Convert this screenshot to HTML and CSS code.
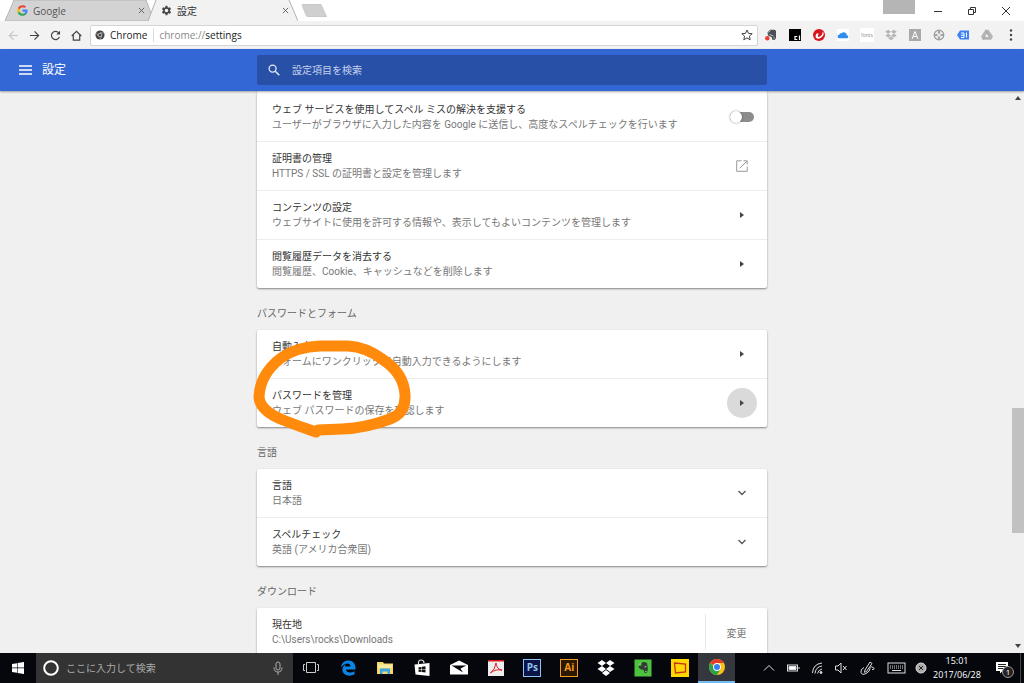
FILE: index.html
```html
<!DOCTYPE html>
<html lang="ja">
<head>
<meta charset="UTF-8">
<title>設定</title>
<link rel="stylesheet" href="styles.css">
</head>
<body>

  <!-- tab strip -->
  <div class="tab-strip">
    <div class="tab">
      <svg class="tab-shape" viewBox="0 0 150 21" preserveAspectRatio="none"><path d="M1 21L10 0H142L150 21Z" fill="#d3d3d3" stroke="#b5b5b5"/></svg>
      <svg class="tab-icon" viewBox="0 0 24 24"><path fill="#4285f4" d="M23 12.3c0-.8-.1-1.5-.2-2.3H12v4.500h6.200c-.3 1.400-1.100 2.600-2.300 3.400v2.900h3.700c2.200-2 3.400-5 3.400-8.500z"/><path fill="#34a853" d="M12 23.500c3.100 0 5.700-1 7.600-2.700l-3.700-2.900c-1 .7-2.400 1.100-3.900 1.100-3 0-5.500-2-6.400-4.700H1.800v2.900c1.900 3.700 5.800 6.300 10.200 6.300z"/><path fill="#fbbc05" d="M5.600 14.300c-.5-1.500-.5-3.100 0-4.600V6.800H1.800c-1.600 3.200-1.600 7.200 0 10.400z"/><path fill="#ea4335" d="M12 5c1.700 0 3.200.6 4.400 1.700l3.300-3.300C17.700 1.500 15 .5 12 .5 7.600.5 3.700 3.100 1.800 6.800l3.800 2.900C6.500 7 9 5 12 5z"/></svg>
      <span class="tab-title">Google</span>
      <button class="tab-close" aria-label="閉じる"><svg viewBox="0 0 8 8"><path d="M1 1l6 6M7 1L1 7"/></svg></button>
    </div>
    <div class="tab active">
      <svg class="tab-shape" viewBox="0 0 150 21" preserveAspectRatio="none"><path d="M0 21L8 0H141L150 21Z" fill="#f2f2f2"/><path d="M0 21L8 0M141 0L150 21" fill="none" stroke="#b0b0b0"/></svg>
      <svg class="tab-icon" viewBox="0 0 24 24"><path fill="#444" d="M19.400 13c0-.3.100-.6.100-1s0-.7-.1-1l2.600-2-2.500-4.300-3 1.200c-.6-.5-1.300-.9-2-1.200L14 1.500H10l-.5 3.200c-.7.300-1.400.7-2 1.200l-3-1.200L2 9l2.600 2c0 .3-.1.600-.1 1s0 .7.100 1L2 15l2.500 4.300 3-1.200c.6.500 1.300.9 2 1.200l.5 3.200h4l.5-3.200c.7-.3 1.400-.7 2-1.200l3 1.200L22 15zM12 16a4 4 0 1 1 0-8 4 4 0 0 1 0 8z"/></svg>
      <span class="tab-title">設定</span>
      <button class="tab-close" aria-label="閉じる"><svg viewBox="0 0 8 8"><path d="M1 1l6 6M7 1L1 7"/></svg></button>
    </div>
    <button class="new-tab" aria-label="新しいタブ"><svg viewBox="0 0 26 13"><path d="M1 .5H20L25.500 12.500H7Q5.500 12.500 5 11Z" fill="#cfcfcf" stroke="#c8c8c8"/></svg></button>
    <div class="window-controls">
      <span class="user-box"></span>
      <button aria-label="最小化"><svg viewBox="0 0 10 10"><path d="M1 5.500h8"/></svg></button>
      <button aria-label="元に戻す"><svg viewBox="0 0 10 10"><path d="M1.500 3.500h5v5h-5zM3.500 3V1.500h5v5H7"/></svg></button>
      <button aria-label="ウィンドウを閉じる"><svg viewBox="0 0 10 10"><path d="M1 1l8 8M9 1L1 9"/></svg></button>
    </div>
  </div>

  <!-- toolbar -->
  <div class="toolbar">
    <div class="nav">
      <button class="disabled" aria-label="戻る"><svg viewBox="0 0 12 12"><path d="M11 6H1.500M6 1.500L1.500 6 6 10.500"/></svg></button>
      <button aria-label="進む"><svg viewBox="0 0 12 12"><path d="M1 6h9.500M6 1.500L10.500 6 6 10.500"/></svg></button>
      <button aria-label="再読み込み"><svg viewBox="0 0 12 12"><path d="M10.300 7.500A4.500 4.500 0 1 1 9.500 3"/><path d="M11 .8V5H6.800z" fill="#444" stroke="none"/></svg></button>
      <button aria-label="ホーム"><svg viewBox="0 0 12 12"><path d="M.8 6.500L6 1.500l5.200 5M2.500 5.500V11h7V5.500"/></svg></button>
    </div>
    <div class="omnibox">
      <svg class="site-icon" viewBox="0 0 12 12"><circle cx="6" cy="6" r="5.500" fill="#444"/><circle cx="6" cy="6" r="2.200" fill="#444" stroke="#ccc"/><path d="M6 3.500h5M3.800 7.200L1.500 3.300M8.200 7.200L6 11.300" stroke="#ccc" stroke-width=".7"/></svg>
      <span class="site-name">Chrome</span>
      <label class="scheme" for="url">chrome://</label>
      <input id="url" type="text" value="settings">
      <button class="star" aria-label="ブックマーク"><svg viewBox="0 0 12 12"><path d="M6 1l1.500 3.400 3.700.3-2.800 2.500.8 3.600L6 8.900l-3.200 1.900.8-3.600L.8 4.700l3.700-.3z" fill="none" stroke="#444"/></svg></button>
    </div>
    <div class="extensions">
      <button aria-label="Evernote"><svg viewBox="0 0 12 12"><path d="M5 .8h4.500l1.500 1v7.500L9.500 11 7 10.500V8.500L3 6.500 2.500 3.500z" fill="#4a5055"/><path d="M3.500 3.500L5.500 1.500M4.500 5.500l4 1.500M8.500 9h1.500" stroke="#d5d8da" stroke-width=".8"/><circle cx="2.300" cy="9.300" r="2.200" fill="#ee3b34"/></svg></button>
      <button aria-label="Cl"><svg viewBox="0 0 12 12"><path d="M0 0h12v12H0z" fill="#000"/><path d="M8.300 7.500H6v3h2.300M10.500 6.500v4.500" fill="none" stroke="#fff" stroke-width="1.200"/></svg></button>
      <button aria-label="Trend"><svg viewBox="0 0 12 12"><circle cx="6" cy="6" r="6" fill="#d9141e"/><path d="M3.500 4.500h2.200L4.800 7q0 1.800 2.200.6Q9.500 6 10 2.500 12 6 8 8.800 4 11 2.700 8.300q-.4-1.500.8-3.800z" fill="#fff"/></svg></button>
      <button aria-label="iCloud"><svg viewBox="0 0 12 12"><path d="M0 0h12v12H0z" fill="#fff"/><path d="M2.500 9.300a1.800 1.800 0 0 1-.3-3.600A2 2 0 0 1 4.500 4.300a3 3 0 0 1 5.300 2 1.500 1.500 0 0 1 0 3z" fill="#2e8ff0"/></svg></button>
      <button class="fonts-ext">fonts</button>
      <button aria-label="Dropbox"><svg viewBox="0 0 12 12"><path d="M3.200.8L6 2.800 3.200 4.700.2 2.800zM8.800.8l3 2-3 1.900L6 2.800zM3.200 4.700L6 6.700 3.200 8.600l-3-2zM8.800 4.700l3 1.900-3 2L6 6.700zM6 7.500l2.800 1.800L6 11.200 3.200 9.300z" fill="#b4b4b4"/></svg></button>
      <button aria-label="Acrobat"><svg viewBox="0 0 12 12"><path d="M0 0h12v12H0z" fill="#a9a9a9"/><path d="M3 10L6 2.500 9 10M4.200 7.500h3.600" fill="none" stroke="#fff"/></svg></button>
      <button aria-label="Target"><svg viewBox="0 0 12 12"><circle cx="6" cy="6" r="4.800" fill="#eee" stroke="#999" stroke-width="1.200"/><path d="M6 2v2.500M6 7.500V10M2 6h2.500M7.500 6H10" stroke="#a2a2a2" stroke-width="2.200"/></svg></button>
      <button aria-label="Bookmark"><svg viewBox="0 0 12 12"><path d="M3 1.500h9v9H3L0 6z" fill="#3d82f3"/><path d="M4 4h3v4.500H4M4 6.200h3M9.500 3.500v5" fill="none" stroke="#fff"/></svg></button>
      <button aria-label="Drive"><svg viewBox="0 0 12 12"><path d="M4.500.8h3L12 7.500l-1.800 3.200H1.800L0 7.500z" fill="#b5b5b5"/><path d="M6 4.500L8 8H4z" fill="#eee"/><path d="M4.500.8l3.700 7M1.800 10.700L4 7.800" stroke="#999" stroke-width=".6"/></svg></button>
      <button aria-label="メニュー"><svg viewBox="0 0 12 12" fill="#444"><circle cx="6" cy="1.500" r="1.200"/><circle cx="6" cy="6" r="1.200"/><circle cx="6" cy="10.500" r="1.200"/></svg></button>
    </div>
  </div>

  <!-- settings header -->
  <header class="settings-header">
    <div class="header-left">
      <button class="menu" aria-label="メインメニュー"><svg viewBox="0 0 13 10"><path d="M0 1h13M0 5h13M0 9h13" stroke="#fff" stroke-width="1.500"/></svg></button>
      <h1>設定</h1>
    </div>
    <label class="search">
      <svg viewBox="0 0 12 12"><circle cx="4.600" cy="4.600" r="3.500" fill="none" stroke="#e4eaf7" stroke-width="1.300"/><path d="M7.300 7.300l4 4" stroke="#e4eaf7" stroke-width="1.500"/></svg>
      <input type="text" placeholder="設定項目を検索" aria-label="設定項目を検索">
    </label>
  </header>

  <div class="viewport">
    <main class="content">
      <section class="card first">
        <div class="row">
          <div class="row-text">
            <label class="row-title" for="spell">ウェブ サービスを使用してスペル ミスの解決を支援する</label>
            <p>ユーザーがブラウザに入力した内容を Google に送信し、高度なスペルチェックを行います</p>
          </div>
          <div class="action"><input class="toggle" type="checkbox" id="spell"></div>
        </div>
        <div class="row">
          <div class="row-text">
            <h3>証明書の管理</h3>
            <p>HTTPS / SSL の証明書と設定を管理します</p>
          </div>
          <button class="action" aria-label="証明書の管理"><svg class="launch" viewBox="0 0 12 12"><path d="M5.500.8H.7v10.500h10.500V6.500M7.500.8h3.700v3.700M11 1L3.800 8.200"/></svg></button>
        </div>
        <div class="row">
          <div class="row-text">
            <h3>コンテンツの設定</h3>
            <p>ウェブサイトに使用を許可する情報や、表示してもよいコンテンツを管理します</p>
          </div>
          <button class="action" aria-label="コンテンツの設定"><svg class="arrow" viewBox="0 0 4 6"><path d="M0 0l4 3-4 3z"/></svg></button>
        </div>
        <div class="row">
          <div class="row-text">
            <h3>閲覧履歴データを消去する</h3>
            <p>閲覧履歴、Cookie、キャッシュなどを削除します</p>
          </div>
          <button class="action" aria-label="閲覧履歴データを消去する"><svg class="arrow" viewBox="0 0 4 6"><path d="M0 0l4 3-4 3z"/></svg></button>
        </div>
      </section>

      <h2>パスワードとフォーム</h2>
      <section class="card">
        <div class="row">
          <div class="row-text">
            <h3>自動入力</h3>
            <p>フォームにワンクリックで自動入力できるようにします</p>
          </div>
          <button class="action" aria-label="自動入力"><svg class="arrow" viewBox="0 0 4 6"><path d="M0 0l4 3-4 3z"/></svg></button>
        </div>
        <div class="row">
          <div class="row-text">
            <h3>パスワードを管理</h3>
            <p>ウェブ パスワードの保存を確認します</p>
          </div>
          <button class="action pressed" aria-label="パスワードを管理"><svg class="arrow" viewBox="0 0 4 6"><path d="M0 0l4 3-4 3z"/></svg></button>
        </div>
        <!-- hand drawn marker -->
        <svg class="marker" viewBox="0 0 170 105"><path d="M66 97Q48 91 33 85Q10 76 9 62Q10 39 31 23Q46 12 70 11L98 11Q116 12 132 24Q154 38 155 60Q156 78 140 84Q116 93 92 94L68 95"/></svg>
      </section>

      <h2>言語</h2>
      <section class="card">
        <div class="row">
          <div class="row-text">
            <h3>言語</h3>
            <p>日本語</p>
          </div>
          <button class="action" aria-label="言語"><svg class="chevron" viewBox="0 0 8 6"><path d="M.5 1L4 4.500 7.500 1"/></svg></button>
        </div>
        <div class="row">
          <div class="row-text">
            <h3>スペルチェック</h3>
            <p>英語 (アメリカ合衆国)</p>
          </div>
          <button class="action" aria-label="スペルチェック"><svg class="chevron" viewBox="0 0 8 6"><path d="M.5 1L4 4.500 7.500 1"/></svg></button>
        </div>
      </section>

      <h2>ダウンロード</h2>
      <section class="card">
        <div class="row">
          <div class="row-text">
            <h3>現在地</h3>
            <p>C:\Users\rocks\Downloads</p>
          </div>
          <button class="change">変更</button>
        </div>
      </section>
    </main>
    <div class="scrollbar">
      <svg viewBox="0 0 6 4"><path d="M0 4l3-4 3 4z"/></svg>
      <div class="track"><div class="thumb"></div></div>
      <svg viewBox="0 0 6 4"><path d="M0 0l3 4 3-4z"/></svg>
    </div>
  </div>

  <!-- windows taskbar -->
  <footer class="taskbar">
    <button class="start" aria-label="スタート"><svg viewBox="0 0 14 14" fill="#fff"><path d="M1 3l5-.8v4.400H1zM6.600 2.100L13 1v5.600H6.600zM1 7.300h5v4.400L1 11zM6.600 7.300H13V13l-6.400-1z"/></svg></button>
    <label class="cortana">
      <svg class="ring" viewBox="0 0 16 16"><circle cx="8" cy="8" r="6.800" fill="none" stroke="#fff" stroke-width="2"/></svg>
      <input type="text" placeholder="ここに入力して検索" aria-label="ここに入力して検索">
      <svg class="mic" viewBox="0 0 10 14" fill="none" stroke="#aaa"><rect x="3" y="1" width="4" height="8" rx="2"/><path d="M1 6.500Q1 11 5 11T9 6.500M5 11v3"/></svg>
    </label>
    <div class="apps">
      <button aria-label="タスクビュー"><svg viewBox="0 0 18 18" fill="none" stroke="#ccc"><path d="M4.500 3.500h9v10h-9zM3 5.500H1.500v6H3M15 5.500h1.500v6H15"/></svg></button>
      <button aria-label="Edge"><svg viewBox="0 0 18 18"><path fill="#0b84e4" d="M2 8.500C2.500 4 5.500 1.500 9.500 1.500c4.500 0 7 3.200 7 7.500v1.500H7c.2 3 4.500 4 8.500 1.800v3.300C9 18.500 2.800 15.500 3.500 10c.3-2.500 2-4 3.500-4.700-.6.700-.9 1.400-1 2.200h5.500c0-4.200-6-4.200-9.500 1z"/></svg></button>
      <button aria-label="エクスプローラー"><svg viewBox="0 0 18 18"><path fill="#f5d66b" d="M1 3h6l1 1.500h9V15H1z"/><path fill="#fbe99f" d="M2 5.500h14V9H2z"/><path fill="#39a5e5" d="M4 9.500h10V15h-2.500v-2.500h-5V15H4z"/></svg></button>
      <button aria-label="ストア"><svg viewBox="0 0 18 18"><path d="M5.500 5Q5 1 8 1t3 3" fill="none" stroke="#ddd" stroke-width="1.200"/><path fill="#fff" d="M1.500 5.500L16.500 4v13L2.500 15.500z"/><path fill="#111" d="M5.500 8.300l3-.4v2.300h-3zM9 7.800l3.500-.5v2.900H9zM5.500 10.700h3V13l-3-.3zM9 10.700h3.500v2.900L9 13.100z"/></svg></button>
      <button aria-label="メール"><svg viewBox="0 0 18 18"><path fill="#fff" d="M0 6l9-4.500L18 6v9.500H0z"/><path fill="#05070c" d="M1.500 6.500h15L10.500 9.500l2.500 4z"/></svg></button>
      <button aria-label="PDF"><svg viewBox="0 0 18 18"><path fill="#eee" d="M1 1h16v16H1z"/><path fill="#d7191f" d="M1 1h16v1.500H1z"/><path d="M3.500 14Q8 11 9 4q.5 6 6 7.200Q9 9.500 3.500 14z" fill="none" stroke="#e01b22"/></svg></button>
      <button><span class="adobe ps">Ps</span></button>
      <button><span class="adobe ai">Ai</span></button>
      <button aria-label="Dropbox"><svg viewBox="0 0 18 18" fill="#fff"><path d="M5 1l4 3-4 3-4.500-3zM13 1l4.500 3L13 7 9 4zM5 7l4 3-4 3-4.500-3zM13 7l4.500 3-4.500 3-4-3zM9 11l4 3-4 3-4-3z"/></svg></button>
      <button aria-label="Evernote"><svg viewBox="0 0 18 18"><path fill="#4cc23f" d="M.5.500h17v17H.5z"/><path fill="#333b36" d="M7.500 3.500q3-1 5.500.5 1.500 4.500.3 9-2.500 2-3.500-.2l.2-1.800Q6.500 11 5 9L4.500 7l3-.5z"/><path d="M4.500 6L7 3.500M10.500 8l2-.5M11 12.500h1.500" stroke="#8fd487"/></svg></button>
      <button aria-label="画面"><svg viewBox="0 0 18 18"><path fill="#ffd800" d="M0 0h18v18H0z"/><path d="M3.500 4L14.500 5v8l-10 1z" fill="none" stroke="#c8321c" stroke-width="1.300"/></svg></button>
      <button class="current" aria-label="Chrome"><svg viewBox="0 0 18 18"><circle cx="9" cy="9" r="8" fill="#fbc116"/><path d="M9 9L2.100 5A8 8 0 0 1 15.900 5H9z" fill="#e33b2e"/><path d="M2.100 5A8 8 0 0 0 9 17l3.500-6H9z" fill="#2ca24c"/><circle cx="9" cy="9" r="3.900" fill="#fff"/><circle cx="9" cy="9" r="3" fill="#3b7ded"/></svg></button>
    </div>
    <div class="tray">
      <svg viewBox="0 0 24 16"><path d="M7 10.500l5-5 5 5"/></svg>
      <svg viewBox="0 0 24 16"><rect x="6.500" y="5" width="10" height="6"/><path d="M8 6.500h7v3H8z" fill="#fff"/><path d="M18 7v2"/></svg>
      <svg viewBox="0 0 24 16"><path d="M7.500 13Q8 4 17 3M10 13.500Q10.500 7 17 6M12.500 13.500Q13 10 17 9"/><circle cx="16" cy="12.500" r="1" fill="#ddd"/></svg>
      <svg viewBox="0 0 24 16"><path d="M6.500 6v4H9l3 3V3L9 6zM14 6l3.500 4M17.500 6L14 10"/></svg>
      <svg class="pen" viewBox="0 0 28 16"><path d="M12 10L17 2l2 1.500-5.500 8-2 .8zM11 7.500q-4 2-3 5t5 1 4-5 3-1-1 2"/></svg>
      <svg class="keyboard" viewBox="0 0 30 16"><rect x="7" y="3" width="17" height="10"/><path d="M9 6h13M9 8h13" stroke-dasharray="1 1"/><path d="M11 10.500h9"/></svg>
      <svg class="alert" viewBox="0 0 20 16"><circle cx="10" cy="8" r="5" fill="#aaa"/><path d="M8 6l4 4M12 6l-4 4" stroke="#222"/></svg>
      <div class="clock"><time>15:01</time><span>2017/06/28</span></div>
      <button class="notice" aria-label="通知"><svg viewBox="0 0 14 14"><path d="M1 1h12v9H7.500L5 12.500V10H1z" fill="#fff" stroke="none"/><path d="M3 3.500h8M3 5.500h8M3 7.500h5" stroke="#222"/></svg><span class="badge">1</span></button>
    </div>
  </footer>

</body>
</html>
```
FILE: styles.css
```css
* {
  box-sizing: border-box;
}
body {
  margin: 0;
  height: 100vh;
  display: flex;
  flex-direction: column;
  overflow: hidden;
  font-family: Roboto, "Noto Sans CJK JP", sans-serif;
  font-size: 10px;
  color: #333;
  background: #f0f0f0;
}
h1, h2, h3, p {
  margin: 0;
  font-weight: 400;
}
button, input {
  margin: 0;
  padding: 0;
  border: 0;
  background: none;
  color: inherit;
  font: inherit;
  min-width: 0;
}
button {
  display: flex;
  align-items: center;
  justify-content: center;
}
input {
  outline: none;
}
svg {
  display: block;
  flex: none;
}

/* tabs */
.tab-strip {
  display: flex;
  height: 21px;
  background: #fff;
  padding-left: 4px;
  font-family: "Open Sans", "Noto Sans CJK JP", sans-serif;
}
.tab {
  position: relative;
  display: flex;
  align-items: center;
  gap: 5px;
  width: 150px;
  padding: 0 9px 0 13px;
  color: #555;
}
.tab.active {
  margin-left: -6px;
  color: #333;
}
.tab-shape {
  position: absolute;
  inset: 0;
  width: 100%;
  height: 100%;
}
.tab-icon {
  position: relative;
  width: 11px;
  height: 11px;
}
.tab-title {
  position: relative;
  flex: 1;
}
.tab-close {
  position: relative;
  width: 8px;
  height: 8px;
}
.tab-close svg {
  width: 7px;
  height: 7px;
  stroke: #555;
}
.new-tab {
  align-self: center;
  margin-left: 3px;
}
.new-tab svg {
  width: 26px;
  height: 13px;
}
.window-controls {
  display: flex;
  margin-left: auto;
  padding-right: 1px;
}
.window-controls button {
  width: 34px;
  height: 21px;
}
.window-controls svg {
  width: 10px;
  height: 10px;
  fill: none;
  stroke: #333;
}
.user-box {
  width: 32px;
  height: 14px;
  margin-right: 6px;
  background: #b5b5b5;
}

/* toolbar */
.toolbar {
  display: flex;
  align-items: center;
  height: 28px;
  padding: 0 1px 0 3px;
  background: #f2f2f2;
  font-family: "Open Sans", sans-serif;
}
.nav, .extensions {
  display: flex;
}
.nav button {
  width: 21px;
  height: 20px;
}
.nav svg {
  width: 11px;
  height: 11px;
  fill: none;
  stroke: #444;
  stroke-width: 1.3;
}
.nav .disabled svg {
  stroke: #c4c4c4;
}
.omnibox {
  flex: 1;
  display: flex;
  align-items: center;
  height: 21px;
  margin: 0 1px 0 3px;
  padding: 0 4px;
  background: #fff;
  border: 1px solid #d5d5d5;
  border-radius: 2px;
  font-size: 10px;
}
.site-icon {
  width: 10px;
  height: 10px;
  margin-right: 5px;
}
.site-name {
  padding-right: 6px;
  border-right: 1px solid #ddd;
  color: #222;
}
.scheme {
  padding-left: 5px;
  color: #888;
}
.omnibox input {
  flex: 1;
  color: #222;
}
.star svg {
  width: 12px;
  height: 12px;
}
.extensions button {
  width: 24px;
  height: 20px;
}
.extensions svg {
  width: 12px;
  height: 12px;
}
.extensions .fonts-ext {
  width: 14px;
  height: 14px;
  margin: 3px 5px;
  background: #fff;
  color: #888;
  font-size: 5px;
}

/* blue header */
.settings-header {
  position: relative;
  z-index: 1;
  display: grid;
  grid-template-columns: 1fr minmax(0, 510px) 1fr;
  align-items: center;
  height: 42px;
  background: #3367d6;
  color: #fff;
  box-shadow: 0 1px 2px rgba(0,0,0,0.35);
}
.header-left {
  display: flex;
  align-items: center;
  gap: 10px;
  padding-left: 19px;
}
.menu svg {
  width: 13px;
  height: 10px;
}
.settings-header h1 {
  font-size: 12px;
  line-height: 16px;
}
.search {
  display: flex;
  align-items: center;
  gap: 12px;
  height: 30px;
  padding: 0 11px;
  background: #2850a7;
  border-radius: 2px;
}
.search svg {
  width: 12px;
  height: 12px;
}
.search input {
  flex: 1;
}
.search input::placeholder {
  color: #c5d2ed;
}

/* settings list */
.viewport {
  flex: 1;
  min-height: 0;
  display: flex;
  overflow: hidden;
}
.content {
  flex: 1;
  padding-left: 12px;
}
.content h2 {
  max-width: 510px;
  margin: 0 auto;
  padding: 18px 0 8px;
  font-size: 10px;
  line-height: 16px;
  color: #666;
}
.card {
  position: relative;
  max-width: 510px;
  margin: 0 auto;
  background: #fff;
  border-radius: 2px;
  box-shadow: 0 1px 2px rgba(0,0,0,0.45);
}
.card.first {
  padding-top: 2px;
}
.row {
  display: flex;
  align-items: center;
  height: 49px;
  padding: 0 10px 0 15px;
  border-bottom: 1px solid #ededed;
}
.row:last-of-type {
  height: 48px;
  border-bottom: 0;
}
.row-text {
  flex: 1;
  line-height: 15px;
}
.row-text h3, .row-title {
  display: block;
  font-size: 10px;
  color: #333;
}
.row-text p {
  color: #777;
}
.action {
  display: flex;
  align-items: center;
  justify-content: center;
  width: 30px;
  height: 30px;
  border-radius: 50%;
}
.action.pressed {
  background: #dadada;
}
.arrow {
  width: 4px;
  height: 6px;
  fill: #444;
}
.chevron {
  width: 8px;
  height: 6px;
  fill: none;
  stroke: #555;
  stroke-width: 1.3;
}
.launch {
  width: 12px;
  height: 12px;
  fill: none;
  stroke: #999;
}
.toggle {
  appearance: none;
  position: relative;
  width: 24px;
  height: 10px;
  border-radius: 5px;
  background: #8c8c8c;
}
.toggle::before {
  content: "";
  position: absolute;
  top: -1px;
  left: 0;
  width: 12px;
  height: 12px;
  border-radius: 50%;
  background: #fff;
  box-shadow: 0 0 2px rgba(0,0,0,0.5);
}
.marker {
  position: absolute;
  top: 5px;
  left: -7px;
  width: 170px;
  height: 105px;
  fill: none;
  stroke: #ff8a0c;
  stroke-width: 11;
  stroke-linecap: round;
  stroke-linejoin: round;
  pointer-events: none;
}
.change {
  width: 62px;
  height: 36px;
  margin-right: -10px;
  border-left: 1px solid #e9e9e9;
  color: #777;
}
.scrollbar {
  display: flex;
  flex-direction: column;
  align-items: center;
  width: 12px;
  padding: 5px 0;
}
.scrollbar svg {
  width: 6px;
  height: 4px;
  fill: #444;
}
.track {
  flex: 1;
  width: 100%;
}
.thumb {
  height: 23%;
  margin-top: 308px;
  background: #c1c1c1;
}

/* taskbar */
.taskbar {
  position: relative;
  z-index: 1;
  display: flex;
  height: 30px;
  background: #05070c;
  color: #fff;
  font-family: "Open Sans", "Noto Sans CJK JP", sans-serif;
}
.start {
  width: 36px;
}
.start svg {
  width: 14px;
  height: 14px;
}
.cortana {
  display: flex;
  align-items: center;
  gap: 7px;
  width: 257px;
  padding: 0 10px 0 7px;
  background: #333;
}
.cortana input {
  flex: 1;
}
.cortana input::placeholder {
  color: #aaa;
}
.ring {
  width: 16px;
  height: 16px;
}
.mic {
  width: 10px;
  height: 14px;
}
.apps {
  display: grid;
  grid-template-columns: repeat(12, 1fr);
  width: 442px;
}
.apps svg {
  width: 18px;
  height: 18px;
}
.apps .current {
  background: #34383e;
  border-bottom: 2px solid #76b9ed;
}
.adobe {
  width: 18px;
  height: 18px;
  border: 1px solid;
  font-size: 10px;
  font-weight: 700;
  line-height: 15px;
}
.ps {
  background: #0c1546;
  color: #8fc3f5;
}
.ai {
  background: #2b1800;
  color: #f29a1d;
}
.tray {
  display: flex;
  align-items: center;
  margin-left: auto;
  padding-right: 3px;
}
.tray svg {
  width: 24px;
  height: 16px;
  fill: none;
  stroke: #ddd;
}
.tray .pen {
  width: 28px;
}
.tray .keyboard {
  width: 30px;
}
.tray .alert {
  width: 20px;
}
.clock {
  display: flex;
  flex-direction: column;
  align-items: center;
  width: 52px;
  font-size: 9px;
  line-height: 14px;
}
.notice {
  position: relative;
  width: 38px;
  height: 30px;
  border-right: 1px solid #444;
}
.tray .notice svg {
  width: 14px;
  height: 14px;
}
.badge {
  position: absolute;
  top: 13px;
  left: 19px;
  width: 12px;
  height: 12px;
  border: 1px solid #999;
  border-radius: 50%;
  background: #222;
  font-size: 8px;
  line-height: 10px;
  text-align: center;
}
```
